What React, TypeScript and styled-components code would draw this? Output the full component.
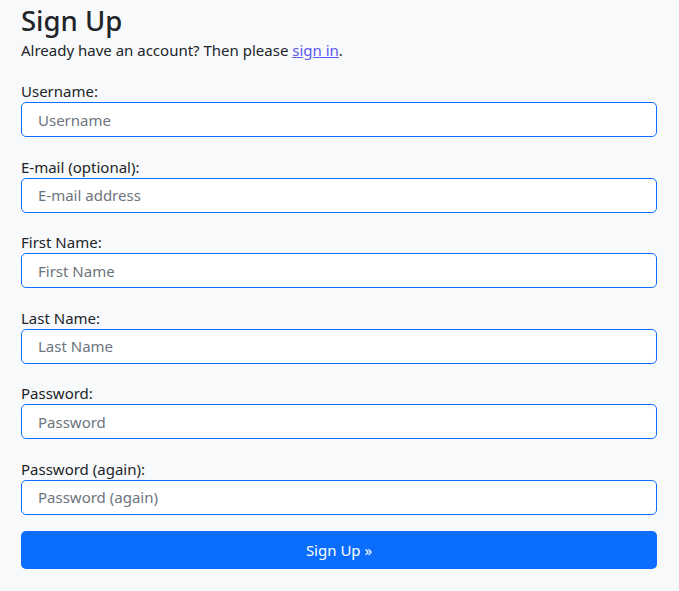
import React from "react";
import styled, { createGlobalStyle } from "styled-components";

const Global = createGlobalStyle`
  html, body { margin: 0; padding: 0; background: #f8f9fa; }
  body {
    font-family: "Noto Sans", "Open Sans", sans-serif;
    color: #212529;
  }
  * { box-sizing: border-box; }
`;

const Page = styled.div`
  width: 679px;
  min-height: 591px;
  background: #f8f9fa;
  padding: 3px 22px 0 21px;
`;

const Title = styled.h1`
  margin: 0;
  font-size: 27.5px;
  font-weight: 500;
  line-height: 36px;
`;

const Lead = styled.p`
  margin: 0 0 20px;
  font-size: 15px;
  line-height: 22px;
`;

const Link = styled.a`
  color: #5b57f2;
  text-decoration: underline;
`;

const Form = styled.form`
  display: flex;
  flex-direction: column;
`;

const Field = styled.div`
  display: flex;
  flex-direction: column;
  margin-bottom: 19.5px;
`;

const Label = styled.label`
  font-size: 15px;
  line-height: 21px;
`;

const Input = styled.input`
  height: 35px;
  width: 100%;
  padding: 0 16px;
  font-family: inherit;
  font-size: 15px;
  color: #212529;
  background: #fff;
  border: 1px solid #0d6efd;
  border-radius: 5px;
  outline: none;
  &::placeholder { color: #6c757d; }
`;

const Button = styled.button`
  height: 38px;
  width: 100%;
  margin-top: -3.5px;
  border: none;
  border-radius: 5px;
  background: #0a6dfd;
  color: #fff;
  font-family: inherit;
  font-size: 15px;
`;

const fields = [
  { label: "Username:", ph: "Username", type: "text" },
  { label: "E-mail (optional):", ph: "E-mail address", type: "email" },
  { label: "First Name:", ph: "First Name", type: "text" },
  { label: "Last Name:", ph: "Last Name", type: "text" },
  { label: "Password:", ph: "Password", type: "password" },
  { label: "Password (again):", ph: "Password (again)", type: "password" },
];

export default function App() {
  return (
    <Page>
      <Global />
      <Title>Sign Up</Title>
      <Lead>
        Already have an account? Then please <Link href="#">sign in</Link>.
      </Lead>
      <Form onSubmit={(e) => e.preventDefault()}>
        {fields.map((f) => (
          <Field key={f.label}>
            <Label>{f.label}</Label>
            <Input type={f.type} placeholder={f.ph} />
          </Field>
        ))}
        <Button type="submit">Sign Up »</Button>
      </Form>
    </Page>
  );
}
